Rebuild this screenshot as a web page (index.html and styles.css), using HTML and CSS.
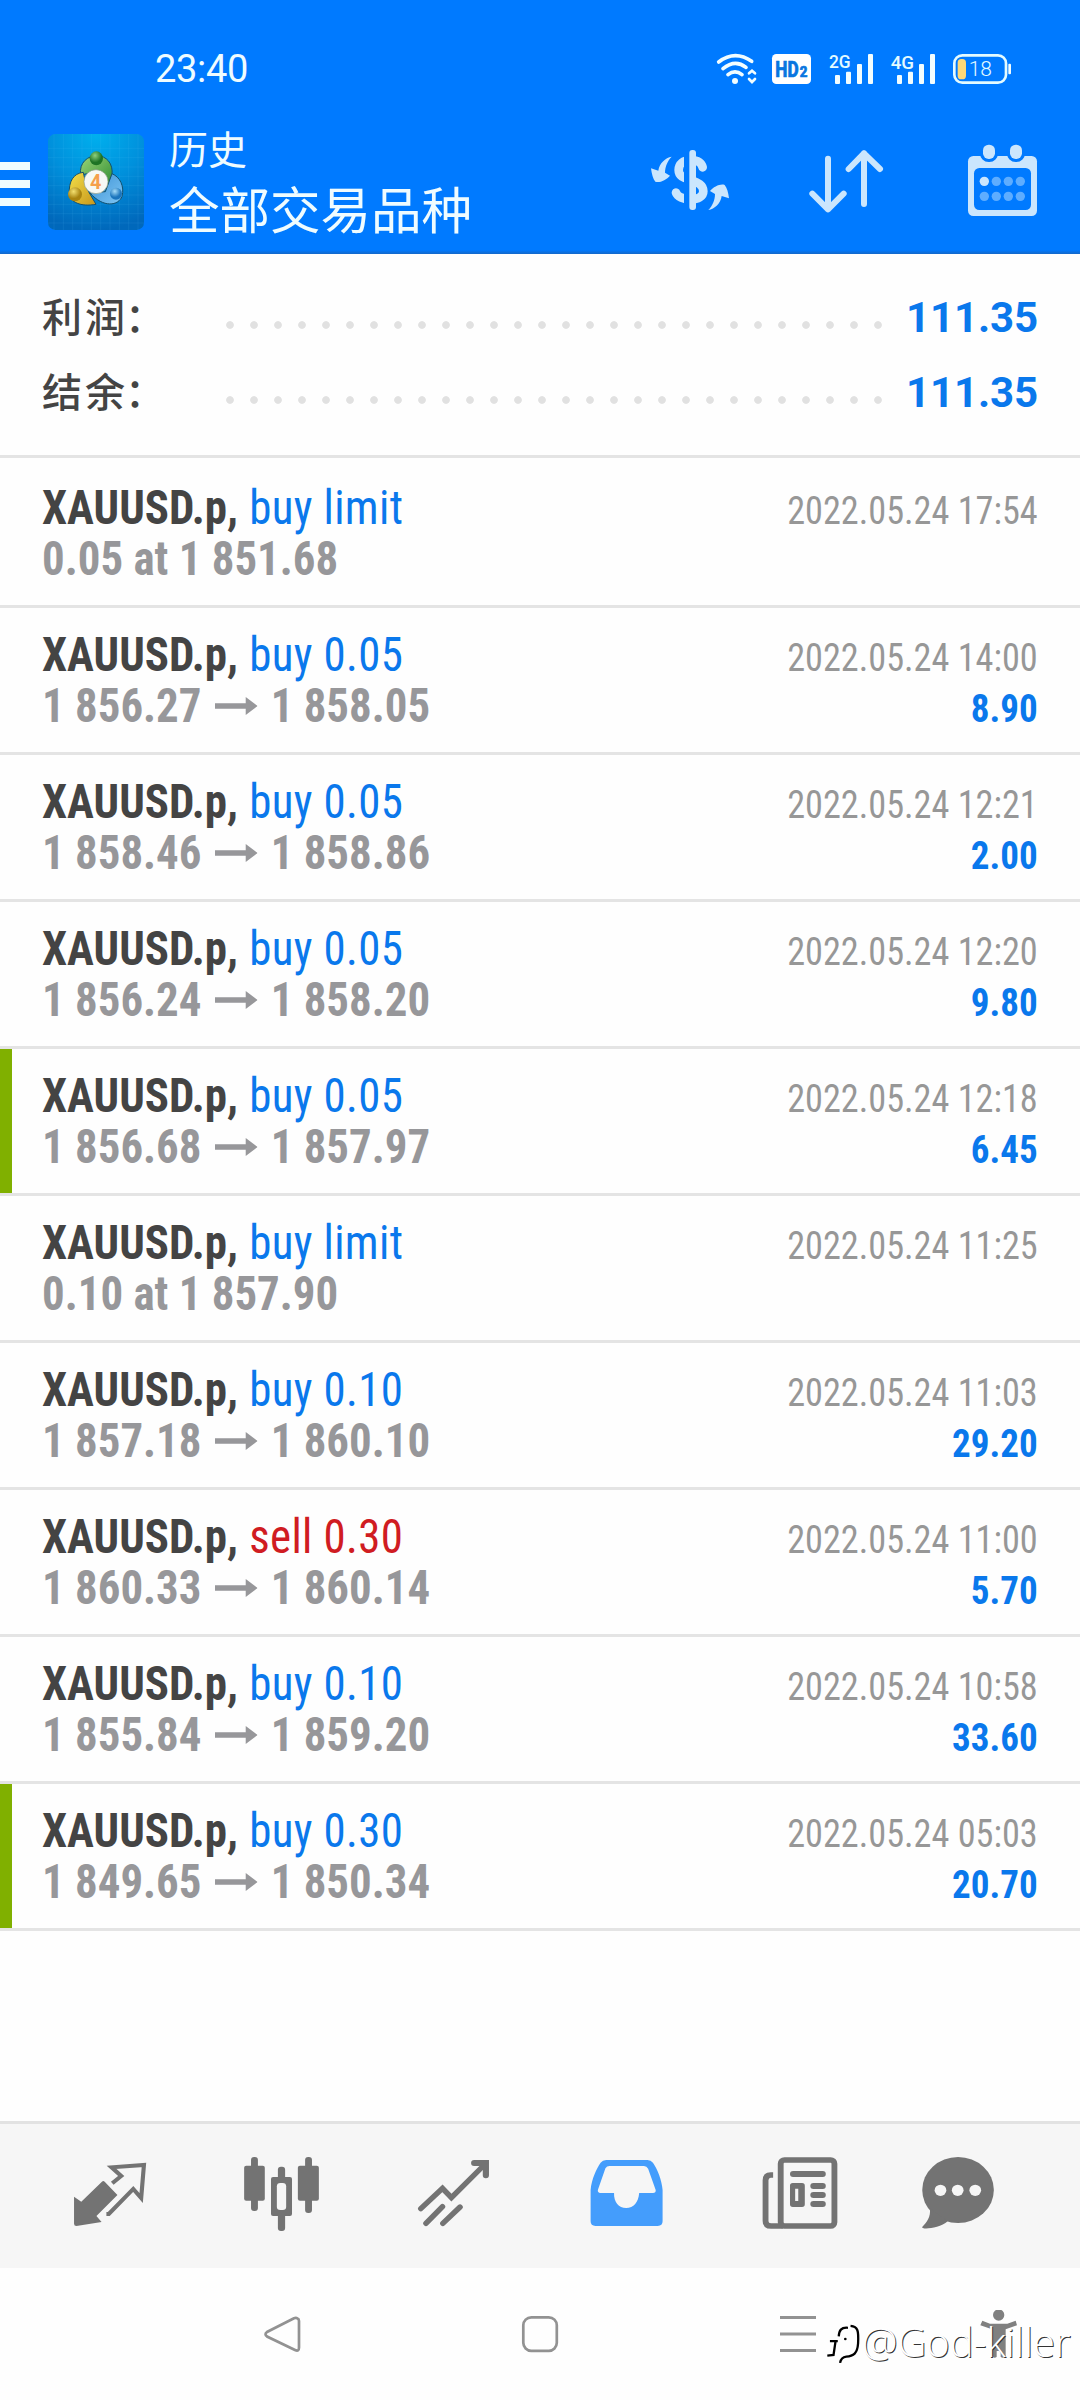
FILE: index.html
```html
<!DOCTYPE html>
<html lang="zh-CN">
<head>
<meta charset="utf-8">
<title>历史</title>
<link rel="stylesheet" href="styles.css">
</head>
<body>
<div class="screen">
  <header class="header">
    <div class="status">
      <span class="clock">23:40</span>
      <svg class="status-icons" viewBox="276 117 924 180" width="308" height="60">
        <g fill="none" stroke="#f2fdff" stroke-width="11" stroke-linecap="round">
          <path d="M296 186Q345 149 395 184M309 206Q345 176 378 202M324 224Q345 207 366 224"/>
          <path d="M387 220L396 212L405 220M387 237L396 246L405 237" stroke-width="8"/>
        </g>
        <circle cx="345" cy="243" r="9" fill="#f2fdff"/>
        <rect x="456" y="162" width="117" height="90" rx="13" fill="#fff"/>
        <g fill="#0876e0" stroke="#0876e0" stroke-width="2" font-weight="800">
          <text x="466" y="230" font-size="65" textLength="70" lengthAdjust="spacingAndGlyphs">HD</text>
          <text x="539" y="230" font-size="42" textLength="23" lengthAdjust="spacingAndGlyphs">2</text>
        </g>
        <g fill="#e4fbff" font-weight="500" font-size="57">
          <text x="627" y="203" textLength="65" lengthAdjust="spacingAndGlyphs">2G</text>
          <text x="812" y="206" textLength="70" lengthAdjust="spacingAndGlyphs">4G</text>
        </g>
        <g fill="#f2fdff">
          <rect x="645" y="225" width="15" height="27" rx="3"/><rect x="678" y="215" width="15" height="37" rx="3"/><rect x="711" y="192" width="15" height="60" rx="3"/><rect x="744" y="162" width="15" height="90" rx="3"/>
          <rect x="831" y="225" width="15" height="27" rx="3"/><rect x="864" y="215" width="15" height="37" rx="3"/><rect x="897" y="192" width="15" height="60" rx="3"/><rect x="930" y="162" width="15" height="90" rx="3"/>
          <rect x="1165" y="191" width="8" height="32" rx="3"/>
        </g>
        <rect x="1003" y="166" width="155" height="82" rx="24" fill="none" stroke="#e4fbff" stroke-width="8"/>
        <rect x="1013" y="177" width="25" height="61" rx="11" fill="#ffd978"/>
        <text x="1046" y="228" font-size="63" font-weight="300" fill="#e4fbff" textLength="70">18</text>
      </svg>
    </div>
    <div class="toolbar">
      <svg class="menu" width="48" height="96" viewBox="0 134 48 96"><path d="M0 162h30v8H0zM0 180h30v8H0zM0 198h30v8H0z" fill="#effcff"/></svg>
      <svg class="logo" width="96" height="96" viewBox="24 27 288 288">
        <defs>
          <radialGradient id="sky" cx=".5" cy="0" r="1"><stop offset="0" stop-color="#00b0ee"/><stop offset=".5" stop-color="#0090dc"/><stop offset="1" stop-color="#0068bb"/></radialGradient>
          <linearGradient id="green" x1="0" y1="0" x2="1" y2="1"><stop offset="0" stop-color="#9bd578"/><stop offset="1" stop-color="#2b8a2e"/></linearGradient>
          <linearGradient id="yellow" x1="0" y1="0" x2="1" y2="1"><stop offset="0" stop-color="#f3e04a"/><stop offset="1" stop-color="#c7961b"/></linearGradient>
          <linearGradient id="blue" x1="0" y1="0" x2="1" y2="1"><stop offset="0" stop-color="#3b8fd2"/><stop offset="1" stop-color="#7dc6f5"/></linearGradient>
          <radialGradient id="gball" cx=".4" cy=".3"><stop offset="0" stop-color="#8fd07c"/><stop offset="1" stop-color="#1e7425"/></radialGradient>
          <radialGradient id="yball" cx=".4" cy=".3"><stop offset="0" stop-color="#f3e070"/><stop offset="1" stop-color="#a98410"/></radialGradient>
          <radialGradient id="bball" cx=".4" cy=".3"><stop offset="0" stop-color="#a5dcf8"/><stop offset="1" stop-color="#1b75bd"/></radialGradient>
        </defs>
        <rect x="24" y="27" width="288" height="288" rx="22" fill="url(#sky)"/>
        <path d="M42 27V315M70 27V315M98 27V315M126 27V315M154 27V315M182 27V315M210 27V315M238 27V315M266 27V315M294 27V315M24 70H312M24 98H312M24 126H312M24 154H312M24 182H312M24 210H312M24 238H312M24 266H312M24 294H312" stroke="#6cf" stroke-opacity=".1" stroke-width="3"/>
        <g stroke="#14506d" stroke-width="3">
          <path d="M122 150C116 112 145 92 170 92C200 92 220 116 216 150L202 192L170 140Z" fill="url(#green)"/>
          <path d="M130 142C100 145 86 170 88 205C90 232 122 246 168 238L140 190Z" fill="url(#yellow)"/>
          <path d="M216 146C240 156 254 184 246 214C236 242 190 250 150 204L196 200Z" fill="url(#blue)"/>
        </g>
        <ellipse cx="169" cy="100" rx="20" ry="21" fill="url(#gball)"/>
        <circle cx="105" cy="208" r="21" fill="url(#yball)"/>
        <circle cx="228" cy="206" r="18" fill="url(#bball)"/>
        <circle cx="168" cy="170" r="36" fill="#f6f8f4" stroke="#8a9a86" stroke-width="2"/>
        <text x="150" y="191" font-size="60" font-weight="700" fill="#f5a04c" textLength="34" lengthAdjust="spacingAndGlyphs">4</text>
      </svg>
      <div class="titles">
        <div class="title">历史</div>
        <div class="subtitle">全部交易品种</div>
      </div>
      <div class="actions">
        <svg width="120" height="96" viewBox="640 134 120 96">
          <g transform="translate(640 130) scale(.33333)">
            <path d="M188 112C184 96 170 90 152 90C130 90 116 102 116 120C116 140 134 144 152 150C174 158 190 164 190 184C190 200 174 208 152 208C130 208 112 200 108 188" fill="none" stroke="#cbe6fd" stroke-width="26" stroke-linecap="round"/>
            <path d="M132 70h18v160h-18z" fill="#007aff"/>
            <rect x="148" y="60" width="20" height="180" rx="9" fill="#cbe6fd"/>
            <g id="swap"><path d="M95 80C76 83 58 100 55 122L33 115C35 132 39 147 46 155C58 160 79 150 90 137L75 128C75 110 83 92 95 80Z" fill="#cbe6fd"/></g>
            <use href="#swap" transform="rotate(180 150 160)"/>
          </g>
        </svg>
        <svg width="160" height="96" viewBox="760 134 160 96">
          <path transform="translate(620) scale(.33333)" d="M624 476V628M577 581L624 628L671 581M732 612V460M686 507L732 460L780 507" fill="none" stroke="#cbe6fd" stroke-width="18" stroke-linecap="round" stroke-linejoin="round"/>
        </svg>
        <svg width="160" height="96" viewBox="920 134 160 96">
          <g transform="translate(620) scale(.33333)" fill="#cbe6fd">
            <rect x="1044" y="468" width="207" height="180" rx="16"/>
            <rect x="1062" y="504" width="171" height="126" rx="16" fill="#007aff"/>
            <g stroke="#007aff" stroke-width="18" paint-order="stroke"><rect x="1089" y="434" width="36" height="43" rx="17"/><rect x="1170" y="434" width="36" height="43" rx="17"/></g>
            <circle cx="1093" cy="544" r="14"/>
            <g fill="#5eadff"><circle cx="1129" cy="544" r="14"/><circle cx="1165" cy="544" r="14"/><circle cx="1201" cy="544" r="14"/><circle cx="1093" cy="589" r="14"/><circle cx="1129" cy="589" r="14"/><circle cx="1165" cy="589" r="14"/><circle cx="1201" cy="589" r="14"/></g>
          </g>
        </svg>
      </div>
    </div>
  </header>

  <section class="summary">
    <div class="sum-row"><span class="sum-label">利润<span class="colon">：</span></span><i class="dots"></i><b class="sum-value">111.35</b></div>
    <div class="sum-row"><span class="sum-label">结余<span class="colon">：</span></span><i class="dots"></i><b class="sum-value">111.35</b></div>
  </section>

  <svg width="0" height="0" class="defs"><symbol id="arrow" viewBox="0 0 43 18" preserveAspectRatio="none"><path d="M0 6.3H31V0L43 9L31 18V11.7H0Z"/></symbol></svg>

  <main class="deals">
    <div class="deal">
      <div class="deal-main"><div><b>XAUUSD.p,</b> <span class="buy">buy limit</span></div><div class="price">0.05 at 1 851.68</div></div>
      <div class="deal-side"><div class="date">2022.05.24 17:54</div></div>
    </div>
    <div class="deal">
      <div class="deal-main"><div><b>XAUUSD.p,</b> <span class="buy">buy 0.05</span></div><div class="price">1 856.27<svg class="arr"><use href="#arrow"/></svg>1 858.05</div></div>
      <div class="deal-side"><div class="date">2022.05.24 14:00</div><div class="profit">8.90</div></div>
    </div>
    <div class="deal">
      <div class="deal-main"><div><b>XAUUSD.p,</b> <span class="buy">buy 0.05</span></div><div class="price">1 858.46<svg class="arr"><use href="#arrow"/></svg>1 858.86</div></div>
      <div class="deal-side"><div class="date">2022.05.24 12:21</div><div class="profit">2.00</div></div>
    </div>
    <div class="deal">
      <div class="deal-main"><div><b>XAUUSD.p,</b> <span class="buy">buy 0.05</span></div><div class="price">1 856.24<svg class="arr"><use href="#arrow"/></svg>1 858.20</div></div>
      <div class="deal-side"><div class="date">2022.05.24 12:20</div><div class="profit">9.80</div></div>
    </div>
    <div class="deal marked">
      <div class="deal-main"><div><b>XAUUSD.p,</b> <span class="buy">buy 0.05</span></div><div class="price">1 856.68<svg class="arr"><use href="#arrow"/></svg>1 857.97</div></div>
      <div class="deal-side"><div class="date">2022.05.24 12:18</div><div class="profit">6.45</div></div>
    </div>
    <div class="deal">
      <div class="deal-main"><div><b>XAUUSD.p,</b> <span class="buy">buy limit</span></div><div class="price">0.10 at 1 857.90</div></div>
      <div class="deal-side"><div class="date">2022.05.24 11:25</div></div>
    </div>
    <div class="deal">
      <div class="deal-main"><div><b>XAUUSD.p,</b> <span class="buy">buy 0.10</span></div><div class="price">1 857.18<svg class="arr"><use href="#arrow"/></svg>1 860.10</div></div>
      <div class="deal-side"><div class="date">2022.05.24 11:03</div><div class="profit">29.20</div></div>
    </div>
    <div class="deal">
      <div class="deal-main"><div><b>XAUUSD.p,</b> <span class="sell">sell 0.30</span></div><div class="price">1 860.33<svg class="arr"><use href="#arrow"/></svg>1 860.14</div></div>
      <div class="deal-side"><div class="date">2022.05.24 11:00</div><div class="profit">5.70</div></div>
    </div>
    <div class="deal">
      <div class="deal-main"><div><b>XAUUSD.p,</b> <span class="buy">buy 0.10</span></div><div class="price">1 855.84<svg class="arr"><use href="#arrow"/></svg>1 859.20</div></div>
      <div class="deal-side"><div class="date">2022.05.24 10:58</div><div class="profit">33.60</div></div>
    </div>
    <div class="deal marked">
      <div class="deal-main"><div><b>XAUUSD.p,</b> <span class="buy">buy 0.30</span></div><div class="price">1 849.65<svg class="arr"><use href="#arrow"/></svg>1 850.34</div></div>
      <div class="deal-side"><div class="date">2022.05.24 05:03</div><div class="profit">20.70</div></div>
    </div>
  </main>

  <nav class="tabs">
    <svg viewBox="24 2124 172 144"><g transform="translate(0 2100) scale(.34435 .33333)" fill="#737373">
      <path d="M215 290L236 305L296 245Q300 241 304 245L341 285L280 348L295 366L222 378Q215 378 215 371Z"/>
      <path d="M326 250L352 228L324 202L418 195L410 294L387 267L316 342L309 342" fill="none" stroke="#737373" stroke-width="12"/>
    </g></svg>
    <svg viewBox="196 2124 172 144"><g transform="translate(0 2100) scale(.34435 .33333)" fill="#737373">
      <rect x="729" y="171" width="20" height="162" rx="9"/><rect x="709" y="197" width="60" height="105" rx="6"/>
      <rect x="807" y="200" width="21" height="193" rx="9"/><rect x="787" y="231" width="61" height="117" rx="6"/><rect x="804" y="249" width="27" height="81" rx="10" fill="#f6f6f6"/>
      <rect x="886" y="171" width="20" height="168" rx="9"/><rect x="865" y="197" width="61" height="105" rx="6"/>
    </g></svg>
    <svg viewBox="368 2124 172 144"><g transform="translate(0 2100) scale(.34435 .33333)" fill="none" stroke="#737373" stroke-width="16" stroke-linecap="round">
      <path d="M1222 326L1285 265L1311 293L1406 195"/><path d="M1377 189H1411V226" stroke-width="18"/><path d="M1237 370L1285 320M1286 370L1336 321"/>
    </g></svg>
    <svg viewBox="540 2124 172 144"><g transform="translate(540 2100) scale(.34435 .33333)" fill="#449dfc">
      <path fill-rule="evenodd" d="M147 270C150 235 165 205 176 188Q182 180 192 180H312Q322 180 328 188C340 205 354 240 356 270V364Q356 378 342 378H161Q147 378 147 364ZM190 205Q194 198 202 198H302Q310 198 314 206L336 270Q337 279 328 279H288C286 307 272 324 250 324C229 324 214 307 215 279H175Q167 278 168 270Z"/>
    </g></svg>
    <svg viewBox="712 2124 172 144"><g transform="translate(540 2100) scale(.34435 .33333)" fill="#737373">
      <path d="M677 225H670Q655 225 655 241V362Q655 378 671 378H705" fill="none" stroke="#737373" stroke-width="17"/>
      <rect x="699" y="180" width="156" height="198" rx="11" fill="none" stroke="#737373" stroke-width="17"/>
      <rect x="726" y="213" width="104" height="18" rx="9"/>
      <path fill-rule="evenodd" d="M734 249H761Q769 249 769 257V313Q769 321 761 321H734Q726 321 726 313V257Q726 249 734 249ZM741 266V303H750V266Z"/>
      <rect x="785" y="249" width="45" height="18" rx="9"/><rect x="785" y="276" width="45" height="18" rx="9"/><rect x="785" y="303" width="45" height="18" rx="9"/>
    </g></svg>
    <svg viewBox="884 2124 172 144"><g transform="translate(540 2100) scale(.34435 .33333)" fill="#737373">
      <ellipse cx="1214" cy="270" rx="104" ry="99"/><path d="M1132 325C1136 352 1122 368 1110 381C1106 390 1160 386 1184 364Z"/>
      <g fill="#f6f6f6"><circle cx="1163" cy="271" r="17"/><circle cx="1213" cy="271" r="17"/><circle cx="1264" cy="271" r="17"/></g>
    </g></svg>
  </nav>

  <footer class="sysnav">
    <svg viewBox="0 0 48 48"><path d="M39.500 8.500Q41 9 41 11V37.500Q41 42 37 40L9 26.500Q6 24.200 9 22L36 8.300Q38 7.500 39.500 8.500Z"/></svg>
    <svg viewBox="0 0 48 48"><rect x="7.300" y="7.300" width="33.500" height="33.500" rx="8"/></svg>
    <svg viewBox="0 0 48 48"><path d="M6 7.500H42M6 24H42M6 40.500H42" stroke-width="3"/></svg>
    <svg class="access" viewBox="0 0 48 48"><g transform="translate(-205 -15) scale(.33333)"><circle cx="686" cy="60" r="17"/><path d="M637 77L660 86H712L737 77L741 91L707 103V183Q700 192 692 186V168H680V186Q672 192 666 183V103L631 91Z"/></g></svg>
    <div class="watermark">
      <svg viewBox="0 0 110 130" width="36" height="43"><g fill="none" stroke="#000" stroke-width="7"><path d="M12 55H36M67 14C46 12 40 22 39 40M29 56L23 97L4 99"/><path d="M75 8C98 10 100 24 98 62C96 92 84 101 62 102Q46 104 43 121"/></g><circle cx="59" cy="48" r="4"/></svg>
      <span>@God-killer</span>
    </div>
  </footer>
</div>
</body>
</html>
```
FILE: styles.css
```css
* { box-sizing: border-box; }
body { margin: 0; background: #fefefe; font-family: Roboto, "Noto Sans CJK SC", sans-serif; }
svg { display: block; flex: none; }
.defs { position: absolute; }
.screen { display: flex; flex-direction: column; width: 1080px; height: 2400px; overflow: hidden; }

.header { height: 254px; flex: none; background: linear-gradient(#007aff 250px, #1468c8 254px); color: #effcff; }
.status { display: flex; height: 99px; padding: 39px 60px 0 155px; justify-content: space-between; }
.clock { font-size: 38px; line-height: 60px; letter-spacing: -.3px; }
.toolbar { display: flex; height: 155px; padding-top: 23px; }
.menu, .logo, .actions { margin-top: 12px; }
.titles { margin-left: 25px; font-family: "Noto Sans CJK SC", sans-serif; white-space: nowrap; }
.title { font-size: 39px; line-height: 50px; }
.subtitle { font-size: 50.500px; line-height: 70px; }
.actions { display: flex; margin-left: auto; }

.summary { height: 204px; flex: none; padding: 24px 42px 0; border-bottom: 3px solid #e4e4e4; }
.sum-row { display: flex; align-items: baseline; height: 75px; line-height: 75px; }
.sum-label { width: 176px; font-family: "Noto Sans CJK SC", sans-serif; font-size: 40px; font-weight: 500; letter-spacing: 3px; color: #444; white-space: nowrap; }
.colon { margin-left: -3px; }
.dots { width: 672px; height: 8px; transform: translateY(-3px); background: radial-gradient(circle, #e1e1e1 3.400px, transparent 4.200px) 0 0 / 24px 8px; }
.sum-value { margin-left: auto; font-size: 42px; font-weight: 700; letter-spacing: -.1px; color: #0a78ec; }

.deals { padding-top: 3px; flex: 1; font-family: "Roboto Condensed", Roboto, sans-serif; line-height: 51px; white-space: nowrap; }
.deal { display: flex; justify-content: space-between; align-items: baseline; height: 147px; padding: 21px 42px 0; border-bottom: 3px solid #e4e4e4; }
.deal.marked { background: linear-gradient(#80b000, #80b000) 0 0 / 12px 144px no-repeat; }
.deal-main { font-size: 48px; color: #444; transform: scaleX(.935); transform-origin: left; }
.deal-side { text-align: right; font-size: 39px; }
.buy, .sell { margin-left: 1px; letter-spacing: .4px; color: #0a78ec; }
.sell { color: #d01c22; }
.price { display: flex; align-items: baseline; font-weight: 700; color: #97979a; }
.arr { width: 45.600px; height: 18px; margin: 0 13.900px 8px 14.500px; transform: translateY(-7px); fill: #97979a; }
.date { color: #979797; transform: scaleX(.929); transform-origin: right; }
.profit { font-weight: 700; color: #0a78ec; transform: scaleX(.95); transform-origin: right; }

.tabs { display: grid; grid-template-columns: repeat(6, 172px); height: 147px; flex: none; padding-left: 24px; border-top: 3px solid #e2e2e2; background: #f6f6f6; }
.tabs svg { width: 172px; height: 144px; }

.sysnav { position: relative; display: flex; align-items: center; gap: 210px; height: 132px; flex: none; padding-left: 258px; }
.sysnav > svg { width: 48px; height: 48px; fill: none; stroke: #929292; stroke-width: 2.700px; }
.sysnav > .access { margin-left: -57px; fill: #808080; stroke: none; }
.watermark { position: absolute; left: 826px; top: 55px; display: flex; }
.watermark span { margin: -11px 0 0 0; font: 300 40px/60px "Open Sans", sans-serif; color: #fff; text-shadow: 1px 1px 0 #333; }
```
